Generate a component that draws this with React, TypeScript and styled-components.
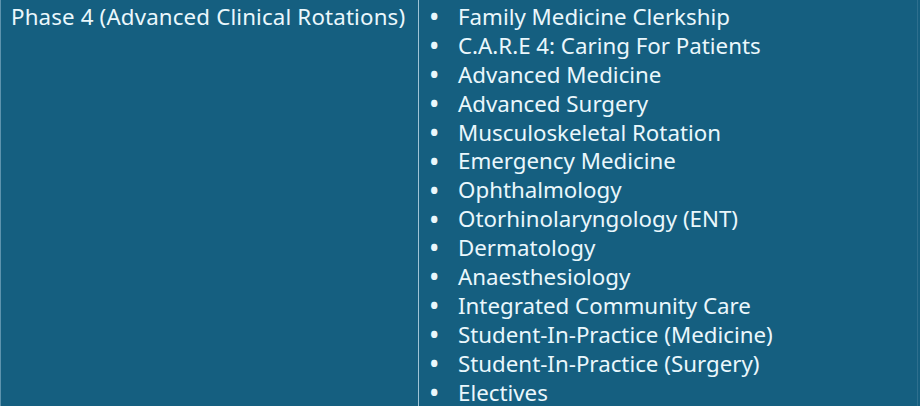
import styled, { createGlobalStyle } from 'styled-components';

const GlobalStyle = createGlobalStyle`
  html, body {
    margin: 0;
    padding: 0;
    background: #155f80;
  }
`;

const items = [
  'Family Medicine Clerkship',
  'C.A.R.E 4: Caring For Patients',
  'Advanced Medicine',
  'Advanced Surgery',
  'Musculoskeletal Rotation',
  'Emergency Medicine',
  'Ophthalmology',
  'Otorhinolaryngology (ENT)',
  'Dermatology',
  'Anaesthesiology',
  'Integrated Community Care',
  'Student-In-Practice (Medicine)',
  'Student-In-Practice (Surgery)',
  'Electives',
];

function App() {
  return (
    <>
      <GlobalStyle />
      <Table>
        <PhaseCell>Phase 4 (Advanced Clinical Rotations)</PhaseCell>
        <ListCell>
          <List>
            {items.map((item) => (
              <Item key={item}>
                <Bullet>•</Bullet>
                <span>{item}</span>
              </Item>
            ))}
          </List>
        </ListCell>
      </Table>
    </>
  );
}

export default App;

const Table = styled.div`
  display: grid;
  grid-template-columns: 418px 499px;
  width: 920px;
  height: 406px;
  overflow: hidden;
  background: #155f80;
  border-left: 1px solid #5d93ad;
  box-sizing: border-box;
  font-family: 'Noto Sans', 'Open Sans', sans-serif;
  font-size: 22.3px;
  color: #eaf7fc;
`;

const PhaseCell = styled.div`
  padding: 3px 0 0 10px;
  line-height: 28.9px;
  border-right: 1px solid #9fc4d6;
  white-space: nowrap;
  letter-spacing: 0.15px;
`;

const ListCell = styled.div`
  border-right: 1px solid #2e6f8e;
`;

const List = styled.ul`
  list-style: none;
  margin: 0;
  padding: 3px 0 0 11px;
`;

const Item = styled.li`
  display: flex;
  align-items: center;
  height: 28.9px;
  line-height: 28.9px;
  white-space: nowrap;
`;

const Bullet = styled.span`
  width: 28px;
  flex-shrink: 0;
  font-size: 22.3px;
  line-height: 1;
  font-weight: 700;
`;
